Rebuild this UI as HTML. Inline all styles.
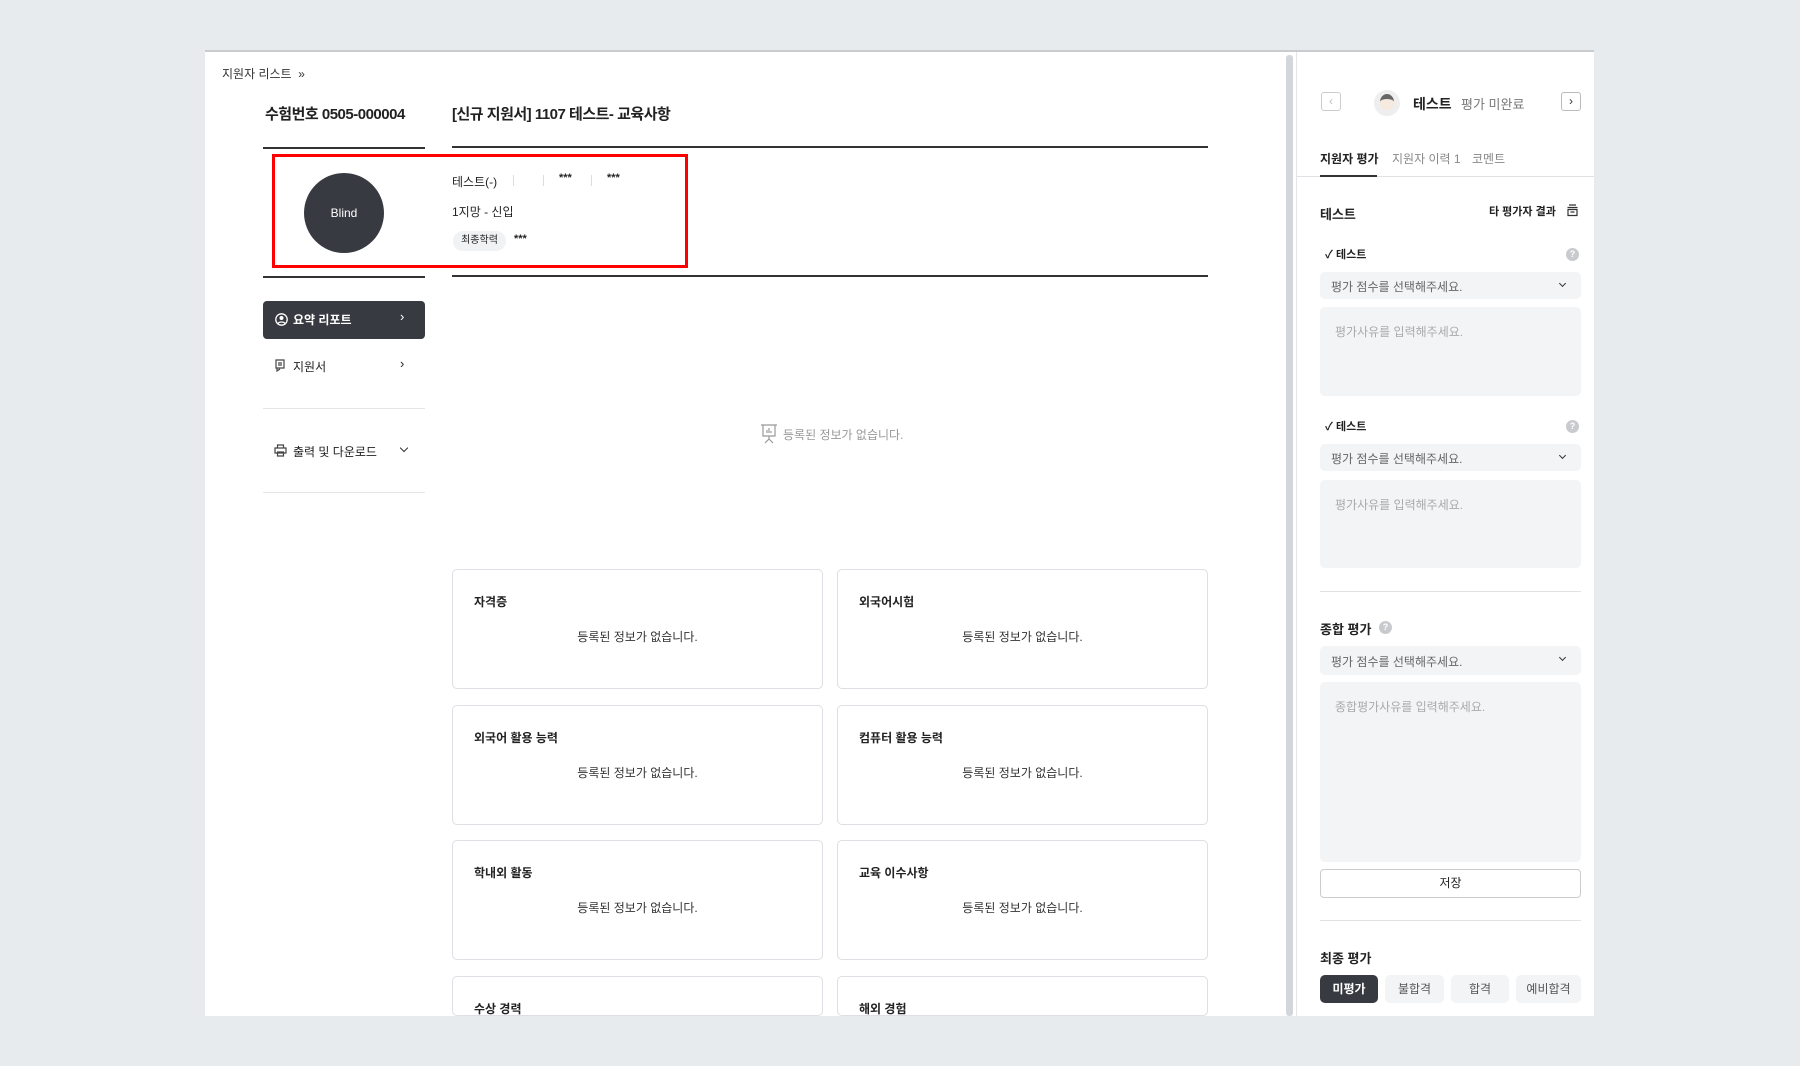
<!DOCTYPE html>
<html><head><meta charset="utf-8"><style>
*{box-sizing:border-box;margin:0;padding:0}
html{width:1800px;height:1066px;overflow:hidden}
body{width:1800px;height:1066px;background:#e8ebee;font-family:"Liberation Sans","Noto Sans CJK KR",sans-serif;color:#222;position:relative;overflow:hidden}
.abs{position:absolute}
.page{position:absolute;left:205px;top:50px;width:1389px;height:966px;background:#fff;border-top:2px solid #c9cbce}
.t{position:absolute;white-space:nowrap}
.hl{position:absolute;height:2px;background:#333}
.card{position:absolute;border:1px solid #dcdfe3;border-radius:5px;background:#fff;width:371px;height:120px}
.card .h{position:absolute;left:21px;top:23px;font-size:12px;font-weight:bold}
.card .e{position:absolute;left:0;right:0;top:58px;text-align:center;font-size:12px;color:#333}
.sel{position:absolute;left:1320px;width:261px;height:27px;background:#f3f4f6;border-radius:5px;font-size:12px;color:#666;padding:6px 11px}
.sel:after{content:"";position:absolute;right:16px;top:9px;width:4px;height:4px;border-right:1.5px solid #333;border-bottom:1.5px solid #333;transform:rotate(45deg)}
.ta{position:absolute;left:1320px;width:261px;background:#f3f4f6;border-radius:5px;font-size:12px;color:#aaa;padding:16px 15px}
.q{position:absolute;width:13px;height:13px;border-radius:50%;background:#c8cacd;color:#fff;font-size:9px;font-weight:bold;text-align:center;line-height:13px}
.btn{position:absolute;top:975px;height:28px;border-radius:5px;background:#f3f4f6;font-size:12px;color:#555;text-align:center;line-height:28px}
</style></head><body>
<div class="page"></div>
<div class="t" style="left:222px;top:65px;font-size:12px;color:#333">지원자 리스트 &nbsp;»</div>
<div class="t" style="left:265px;top:103px;font-size:15px;font-weight:bold;letter-spacing:-0.5px">수험번호 0505-000004</div>
<div class="t" style="left:452px;top:103px;font-size:15px;font-weight:bold;letter-spacing:-0.5px">[신규 지원서] 1107 테스트- 교육사항</div>
<div class="hl" style="left:263px;top:147px;width:162px"></div>
<div class="hl" style="left:452px;top:146px;width:756px"></div>
<div class="hl" style="left:263px;top:276px;width:162px"></div>
<div class="hl" style="left:452px;top:275px;width:756px"></div>
<div class="abs" style="left:272px;top:154px;width:416px;height:114px;border:3px solid #f00"></div>
<div class="abs" style="left:304px;top:173px;width:80px;height:80px;border-radius:50%;background:#373a40;color:#fff;font-size:12px;text-align:center;line-height:80px">Blind</div>
<div class="t" style="left:452px;top:173px;font-size:12px">테스트(-)</div>
<div class="abs" style="left:513px;top:175px;width:1px;height:11px;background:#ddd"></div>
<div class="abs" style="left:543px;top:175px;width:1px;height:11px;background:#ddd"></div>
<div class="abs" style="left:591px;top:175px;width:1px;height:11px;background:#ddd"></div>
<div class="t" style="left:559px;top:172px;font-size:11px;font-weight:bold">***</div>
<div class="t" style="left:607px;top:172px;font-size:11px;font-weight:bold">***</div>
<div class="t" style="left:452px;top:203px;font-size:12px">1지망 - 신입</div>
<div class="abs" style="left:453px;top:231px;width:53px;height:20px;border-radius:10px;background:#f1f2f4;font-size:10px;text-align:center;line-height:20px">최종학력</div>
<div class="t" style="left:514px;top:233px;font-size:11px;font-weight:bold">***</div>
<div class="abs" style="left:263px;top:301px;width:162px;height:38px;border-radius:4px;background:#373a40"></div>
<svg class="abs" style="left:275px;top:313px" width="13" height="13" viewBox="0 0 13 13"><circle cx="6.5" cy="6.5" r="5.7" stroke="#fff" stroke-width="1.3" fill="none"/><circle cx="6.5" cy="5" r="2" fill="#fff"/><path d="M3 10.5c1-2 6-2 7 0" stroke="#fff" stroke-width="1.3" fill="none"/></svg>
<div class="t" style="left:293px;top:311px;font-size:12px;font-weight:bold;color:#fff">요약 리포트</div>
<div class="t" style="left:400px;top:309px;font-size:13px;color:#fff">›</div>
<svg class="abs" style="left:275px;top:359px" width="12" height="13" viewBox="0 0 12 13"><path d="M1 1h8v8H1zM3 4h4M3 6h4M2 9v3l3-2" stroke="#444" stroke-width="1.2" fill="none"/></svg>
<div class="t" style="left:293px;top:358px;font-size:12px">지원서</div>
<div class="t" style="left:400px;top:356px;font-size:13px">›</div>
<div class="abs" style="left:263px;top:408px;width:162px;height:1px;background:#e3e5e8"></div>
<svg class="abs" style="left:274px;top:444px" width="13" height="13" viewBox="0 0 13 13"><path d="M3.5 4V1h6v3M1 4h11v5H1zM3.5 8h6v4h-6z" stroke="#444" stroke-width="1.2" fill="#fff"/></svg>
<div class="t" style="left:293px;top:443px;font-size:12px">출력 및 다운로드</div>
<div class="abs" style="left:401px;top:445px;width:6px;height:6px;border-right:1.5px solid #333;border-bottom:1.5px solid #333;transform:rotate(45deg)"></div>
<div class="abs" style="left:263px;top:492px;width:162px;height:1px;background:#e3e5e8"></div>
<svg class="abs" style="left:760px;top:424px" width="18" height="20" viewBox="0 0 18 20"><path d="M1 1h16M3 1v11h12V1M7 9v-3M9 9v-5M11 9v-2M9 12v3M9 15l-4 4M9 15l4 4" stroke="#999" stroke-width="1.2" fill="none"/></svg>
<div class="t" style="left:783px;top:426px;font-size:12px;color:#999">등록된 정보가 없습니다.</div>
<div class="card" style="left:452px;top:569px"><div class="h">자격증</div><div class="e">등록된 정보가 없습니다.</div></div>
<div class="card" style="left:837px;top:569px"><div class="h">외국어시험</div><div class="e">등록된 정보가 없습니다.</div></div>
<div class="card" style="left:452px;top:705px"><div class="h">외국어 활용 능력</div><div class="e">등록된 정보가 없습니다.</div></div>
<div class="card" style="left:837px;top:705px"><div class="h">컴퓨터 활용 능력</div><div class="e">등록된 정보가 없습니다.</div></div>
<div class="card" style="left:452px;top:840px"><div class="h">학내외 활동</div><div class="e">등록된 정보가 없습니다.</div></div>
<div class="card" style="left:837px;top:840px"><div class="h">교육 이수사항</div><div class="e">등록된 정보가 없습니다.</div></div>
<div class="card" style="left:452px;top:976px;height:40px"><div class="h">수상 경력</div></div>
<div class="card" style="left:837px;top:976px;height:40px"><div class="h">해외 경험</div></div>
<div class="abs" style="left:0;top:1016px;width:1800px;height:50px;background:#e8ebee"></div>
<div class="abs" style="left:1286px;top:55px;width:7px;height:961px;background:#d3d6db;border-radius:3px"></div>
<div class="abs" style="left:1296px;top:52px;width:1px;height:964px;background:#e3e5e8"></div>
<div class="abs" style="left:1321px;top:92px;width:20px;height:19px;border:1px solid #ccc;border-radius:3px;color:#bbb;font-size:12px;text-align:center;line-height:17px">‹</div>
<div class="abs" style="left:1561px;top:92px;width:20px;height:19px;border:1px solid #bbb;border-radius:3px;color:#333;font-size:12px;text-align:center;line-height:17px">›</div>
<div class="abs" style="left:1374px;top:90px;width:26px;height:26px;border-radius:50%;background:#eee"></div>
<div class="abs" style="left:1380px;top:94px;width:14px;height:16px;border-radius:50%;background:#f6e9de;border-top:5px solid #666"></div>
<div class="t" style="left:1413px;top:94px;font-size:14px;font-weight:bold">테스트</div>
<div class="t" style="left:1461px;top:94px;font-size:13px;color:#777">평가 미완료</div>
<div class="t" style="left:1320px;top:150px;font-size:12px;font-weight:bold">지원자 평가</div>
<div class="t" style="left:1392px;top:150px;font-size:12px;color:#888">지원자 이력 1</div>
<div class="t" style="left:1472px;top:150px;font-size:12px;color:#888">코멘트</div>
<div class="abs" style="left:1297px;top:176px;width:297px;height:1px;background:#e0e2e5"></div>
<div class="abs" style="left:1320px;top:175px;width:57px;height:2px;background:#333"></div>
<div class="t" style="left:1320px;top:204px;font-size:13px;font-weight:bold">테스트</div>
<div class="t" style="left:1489px;top:203px;font-size:11px;font-weight:bold">타 평가자 결과</div>
<svg class="abs" style="left:1566px;top:204px" width="13" height="13" viewBox="0 0 13 13"><path d="M3 1h7M1.5 3.5h10M2 5.5h9v6H2zM4.5 8h4" stroke="#333" stroke-width="1.2" fill="none"/></svg>
<div class="t" style="left:1325px;top:246px;font-size:11px;font-weight:bold">✓ 테스트</div>
<div class="q" style="left:1566px;top:248px">?</div>
<div class="sel" style="top:272px">평가 점수를 선택해주세요.</div>
<div class="ta" style="top:307px;height:89px">평가사유를 입력해주세요.</div>
<div class="t" style="left:1325px;top:418px;font-size:11px;font-weight:bold">✓ 테스트</div>
<div class="q" style="left:1566px;top:420px">?</div>
<div class="sel" style="top:444px">평가 점수를 선택해주세요.</div>
<div class="ta" style="top:480px;height:88px">평가사유를 입력해주세요.</div>
<div class="abs" style="left:1320px;top:591px;width:261px;height:1px;background:#e0e2e5"></div>
<div class="t" style="left:1320px;top:619px;font-size:13px;font-weight:bold">종합 평가</div>
<div class="q" style="left:1379px;top:621px">?</div>
<div class="sel" style="top:646px;height:29px;padding-top:7px">평가 점수를 선택해주세요.</div>
<div class="ta" style="top:682px;height:180px">종합평가사유를 입력해주세요.</div>
<div class="abs" style="left:1320px;top:869px;width:261px;height:29px;border:1px solid #ccc;border-radius:4px;font-size:12px;text-align:center;line-height:27px">저장</div>
<div class="abs" style="left:1320px;top:920px;width:261px;height:1px;background:#e0e2e5"></div>
<div class="t" style="left:1320px;top:948px;font-size:13px;font-weight:bold">최종 평가</div>
<div class="btn" style="left:1320px;width:58px;background:#373a40;color:#fff;font-weight:bold">미평가</div>
<div class="btn" style="left:1385px;width:59px">불합격</div>
<div class="btn" style="left:1451px;width:58px">합격</div>
<div class="btn" style="left:1516px;width:65px">예비합격</div>
</body></html>
